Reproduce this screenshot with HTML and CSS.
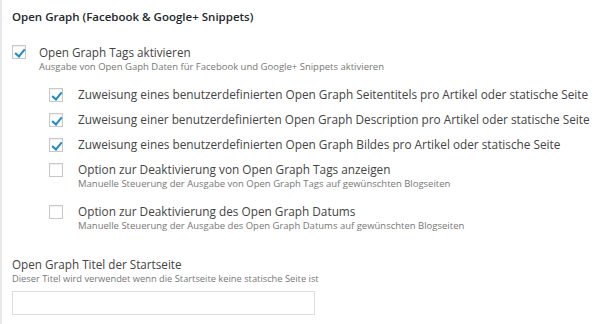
FILE: index.html
```html
<!DOCTYPE html>
<html lang="de">
  <head>
    <meta charset="utf-8" />
    <title>Open Graph</title>
    <link rel="stylesheet" href="styles.css">
  </head>
  <body>
    <div class="panel">
      <h2 class="panel-title">Open Graph (Facebook &amp; Google+ Snippets)</h2>

      <div class="option main">
        <span class="check is-checked"></span>
        <div class="option-text">
          <div class="label">Open Graph Tags aktivieren</div>
          <div class="desc">Ausgabe von Open Gaph Daten für Facebook und Google+ Snippets aktivieren</div>
        </div>
      </div>

      <div class="sub-options">
        <div class="option row">
          <span class="check is-checked"></span>
          <div class="label">Zuweisung eines benutzerdefinierten Open Graph Seitentitels pro Artikel oder statische Seite</div>
        </div>
        <div class="option row">
          <span class="check is-checked"></span>
          <div class="label">Zuweisung einer benutzerdefinierten Open Graph Description pro Artikel oder statische Seite</div>
        </div>
        <div class="option row">
          <span class="check is-checked"></span>
          <div class="label">Zuweisung eines benutzerdefinierten Open Graph Bildes pro Artikel oder statische Seite</div>
        </div>
        <div class="option row">
          <span class="check"></span>
          <div class="option-text">
            <div class="label">Option zur Deaktivierung von Open Graph Tags anzeigen</div>
            <div class="desc">Manuelle Steuerung der Ausgabe von Open Graph Tags auf gewünschten Blogseiten</div>
          </div>
        </div>
        <div class="option row spaced">
          <span class="check"></span>
          <div class="option-text">
            <div class="label">Option zur Deaktivierung des Open Graph Datums</div>
            <div class="desc">Manuelle Steuerung der Ausgabe des Open Graph Datums auf gewünschten Blogseiten</div>
          </div>
        </div>
      </div>

      <div class="field">
        <div class="label">Open Graph Titel der Startseite</div>
        <div class="desc">Dieser Titel wird verwendet wenn die Startseite keine statische Seite ist</div>
        <input class="text-input" type="text" />
      </div>
    </div>
  </body>
</html>
```

FILE: styles.css
```css
* {
  margin: 0;
  padding: 0;
  box-sizing: border-box;
}

body {
  background-color: #fff;
  font-family: 'Open Sans', 'Noto Sans', sans-serif;
  color: #444;
}

.panel {
  height: 324px;
  overflow: hidden;
  border-left: 2px solid #e8e8e8;
  padding: 8px 10px 0;
}

.panel-title {
  font-size: 11.5px;
  font-weight: 600;
  line-height: 18px;
  color: #23282d;
}

.option {
  display: flex;
  align-items: flex-start;
  white-space: nowrap;
}

.option.main {
  margin-top: 18px;
}

.check {
  flex: none;
  position: relative;
  width: 14px;
  height: 14px;
  margin: 1px 13px 0 0;
  border: 1px solid #c8c8c8;
  box-shadow: inset 0 1px 2px rgba(0, 0, 0, 0.07);
  background-color: #fff;
}

.check.is-checked:after {
  position: absolute;
  left: 3.5px;
  top: 0.5px;
  width: 4px;
  height: 8px;
  border: solid #1e8cbe;
  border-width: 0 2.5px 2.5px 0;
  transform: rotate(40deg);
  content: '';
}

.label {
  font-size: 11.7px;
  line-height: 16px;
  color: #444;
}

.sub-options .label {
  font-size: 11.8px;
}

.desc {
  font-size: 9.5px;
  line-height: 14px;
  color: #777;
}

.field .desc {
  font-size: 9.3px;
}

.sub-options {
  padding-left: 37px;
  margin-top: 12px;
}

.sub-options .check {
  margin-top: 2px;
  margin-right: 15px;
}

.sub-options .row + .row {
  margin-top: 9px;
}

.sub-options .row.spaced {
  margin-top: 12px;
}

.field {
  margin-top: 23px;
}

.text-input {
  display: block;
  width: 303px;
  height: 24px;
  margin-top: 5px;
  border: 1px solid #ddd;
  background-color: #fff;
}
```
